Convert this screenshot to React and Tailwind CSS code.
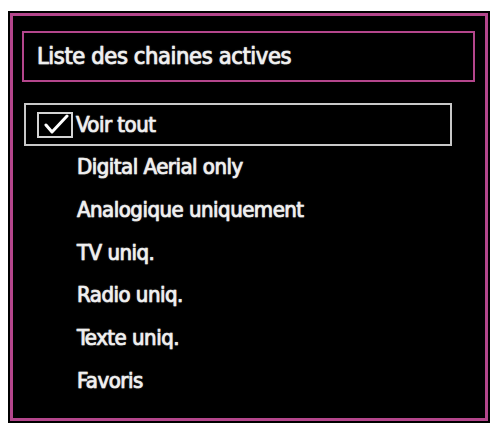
import React from "react";

const items = [
  "Digital Aerial only",
  "Analogique uniquement",
  "TV uniq.",
  "Radio uniq.",
  "Texte uniq.",
  "Favoris",
];

export default function App() {
  return (
    <div className="w-[492px] h-[426px] bg-white pt-[11px] pl-[8px] font-['DejaVu_Sans_Condensed','DejaVu_Sans',sans-serif] font-stretch-condensed text-[#f2f2f2] [-webkit-text-stroke:0.7px_#eeeeee] [text-shadow:0_0_1.5px_rgba(255,255,255,0.7)]">
      <div className="w-[482px] h-[412px] bg-black p-[2px]">
        <div className="h-full border-[3px] border-[#b4468c] pl-[9px] pt-[15px]">
          <div className="w-[453px] h-[51px] border-2 border-[#b4468c] flex items-center pl-[13px] text-[23.5px] tracking-[-0.4px] leading-none">
            Liste des chaines actives
          </div>
          <div className="mt-[21px] ml-[2px] w-[428px] h-[43px] border-2 border-[#c8c8c8] flex items-center pl-[11px]">
            <div className="w-[36px] h-[26px] border-2 border-[#d4d4d4] flex items-center justify-center">
              <svg width="32" height="22" viewBox="0 0 32 22">
                <path d="M7 11 L13 18 L28 2" fill="none" stroke="#ffffff" strokeWidth="3" strokeLinecap="round" strokeLinejoin="round" />
              </svg>
            </div>
            <span className="ml-[3px] text-[22px] tracking-[-0.5px] leading-none">Voir tout</span>
          </div>
          <div className="flex flex-col">
            {items.map((t) => (
              <div key={t} className="h-[42.7px] flex items-center pl-[55px] text-[22px] tracking-[-0.5px] leading-none">
                {t}
              </div>
            ))}
          </div>
        </div>
      </div>
    </div>
  );
}
